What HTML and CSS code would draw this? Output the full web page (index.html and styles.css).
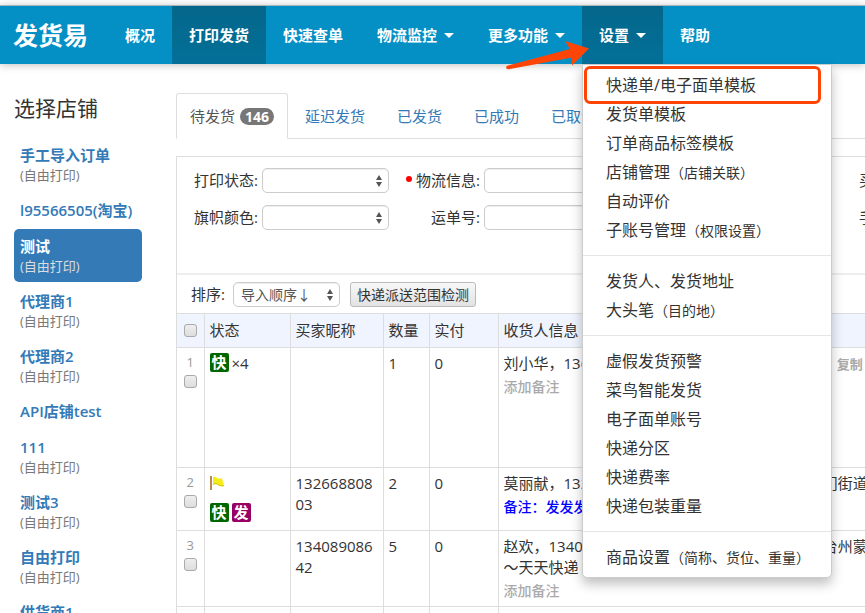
FILE: index.html
```
<!DOCTYPE html>
<html lang="zh-CN">
<head>
    <meta charset="UTF-8">
    <meta name="viewport" content="width=device-width, initial-scale=1.0">
    <title>发货易</title>
    <link rel="stylesheet" href="styles.css">
</head>
<body>
    <header class="navbar">
        <a class="brand" href="#">发货易</a>
        <ul class="nav">
            <li><a href="#">概况</a></li>
            <li class="active"><a href="#">打印发货</a></li>
            <li><a href="#">快速查单</a></li>
            <li><a href="#">物流监控<span class="caret"></span></a></li>
            <li><a href="#">更多功能<span class="caret"></span></a></li>
            <li class="active dropdown">
                <a href="#">设置<span class="caret"></span></a>
                <svg class="arrow" width="84" height="30" viewBox="0 0 84 30">
                    <path fill="#ff4505" d="M3 25.500L65 9L60 1L84 8.500L67 25.500L67 17.500L5 29Q1 30 1 27Q1 26 3 25.500Z"/>
                </svg>
                <ul class="menu">
                    <li class="marked"><a href="#">快递单/电子面单模板</a></li>
                    <li><a href="#">发货单模板</a></li>
                    <li><a href="#">订单商品标签模板</a></li>
                    <li><a href="#">店铺管理<small>（店铺关联）</small></a></li>
                    <li><a href="#">自动评价</a></li>
                    <li><a href="#">子账号管理<small>（权限设置）</small></a></li>
                    <li class="divider"></li>
                    <li><a href="#">发货人、发货地址</a></li>
                    <li><a href="#">大头笔<small>（目的地）</small></a></li>
                    <li class="divider"></li>
                    <li><a href="#">虚假发货预警</a></li>
                    <li><a href="#">菜鸟智能发货</a></li>
                    <li><a href="#">电子面单账号</a></li>
                    <li><a href="#">快递分区</a></li>
                    <li><a href="#">快递费率</a></li>
                    <li><a href="#">快递包装重量</a></li>
                    <li class="divider"></li>
                    <li><a href="#">商品设置<small>（简称、货位、重量）</small></a></li>
                </ul>
            </li>
            <li><a href="#">帮助</a></li>
        </ul>
    </header>

    <div class="page">
        <aside class="sidebar">
            <h2>选择店铺</h2>
            <ul class="shops">
                <li><a href="#">手工导入订单<small>(自由打印)</small></a></li>
                <li><a href="#">l95566505(淘宝)</a></li>
                <li class="active"><a href="#">测试<small>(自由打印)</small></a></li>
                <li><a href="#">代理商1<small>(自由打印)</small></a></li>
                <li><a href="#">代理商2<small>(自由打印)</small></a></li>
                <li><a href="#">API店铺test</a></li>
                <li><a href="#">111<small>(自由打印)</small></a></li>
                <li><a href="#">测试3<small>(自由打印)</small></a></li>
                <li><a href="#">自由打印<small>(自由打印)</small></a></li>
                <li><a href="#">供货商1<small>(自由打印)</small></a></li>
            </ul>
        </aside>

        <main class="main">
            <ul class="tabs">
                <li class="active"><a href="#">待发货<span class="badge">146</span></a></li>
                <li><a href="#">延迟发货</a></li>
                <li><a href="#">已发货</a></li>
                <li><a href="#">已成功</a></li>
                <li><a href="#">已取消</a></li>
            </ul>

            <div class="panel">
                <form class="filters">
                    <label for="printState">打印状态:</label>
                    <div class="select">
                        <select id="printState"><option></option></select>
                        <svg width="8" height="12" viewBox="0 0 8 12"><path d="M1 5L4 0L7 5ZM1 7L4 12L7 7Z"/></svg>
                    </div>
                    <label for="logistics"><i class="dot"></i>物流信息:</label>
                    <input type="text" id="logistics">
                    <label for="buyer">买家昵称:</label>

                    <label for="flagColor">旗帜颜色:</label>
                    <div class="select">
                        <select id="flagColor"><option></option></select>
                        <svg width="8" height="12" viewBox="0 0 8 12"><path d="M1 5L4 0L7 5ZM1 7L4 12L7 7Z"/></svg>
                    </div>
                    <label for="waybill">运单号:</label>
                    <input type="text" id="waybill">
                    <label for="phone">手机号码:</label>
                </form>

                <div class="toolbar">
                    <label for="sort">排序:</label>
                    <div class="select">
                        <select id="sort"><option>导入顺序↓</option></select>
                        <svg width="8" height="12" viewBox="0 0 8 12"><path d="M1 5L4 0L7 5ZM1 7L4 12L7 7Z"/></svg>
                    </div>
                    <button type="button" class="btn">快递派送范围检测</button>
                </div>

                <table class="orders">
                    <colgroup>
                        <col class="col-check">
                        <col class="col-state">
                        <col class="col-buyer">
                        <col class="col-count">
                        <col class="col-paid">
                        <col>
                    </colgroup>
                    <thead>
                        <tr>
                            <th class="check"><input type="checkbox" aria-label="全选"></th>
                            <th>状态</th>
                            <th>买家昵称</th>
                            <th>数量</th>
                            <th>实付</th>
                            <th>收货人信息</th>
                        </tr>
                    </thead>
                    <tbody>
                        <tr class="tall">
                            <td class="check">1<input type="checkbox" aria-label="订单1"></td>
                            <td><div class="tags"><span class="tag">快</span>×4</div></td>
                            <td></td>
                            <td>1</td>
                            <td>0</td>
                            <td>
                                刘小华，13600000000，浙江省杭州市西湖区文<button type="button" class="copy">复制</button>
                                <div class="remark">添加备注</div>
                            </td>
                        </tr>
                        <tr>
                            <td class="check">2<input type="checkbox" aria-label="订单2"></td>
                            <td>
                                <svg class="flag" width="15" height="15" viewBox="0 0 15 15">
                                    <path fill="#b98a50" d="M0 1H2V15H0Z"/>
                                    <path fill="#f4ec1c" d="M3 2Q5 1 7 3Q9 4 12 3L14 11Q11 12 8 10Q6 8 3 10Z"/>
                                    <path fill="#d9c800" d="M3 9Q6 7 8 9Q11 11 14 10V11Q11 12 8 10Q6 8 3 10Z"/>
                                </svg>
                                <div class="tags"><span class="tag">快</span><span class="tag purple">发</span></div>
                            </td>
                            <td>13266880803</td>
                            <td>2</td>
                            <td>0</td>
                            <td>
                                莫丽献，13266880803，广东省江门市蓬江区东门街道
                                <div class="remark note">备注：发发发</div>
                            </td>
                        </tr>
                        <tr class="last">
                            <td class="check">3<input type="checkbox" aria-label="订单3"></td>
                            <td></td>
                            <td>13408908642</td>
                            <td>5</td>
                            <td>0</td>
                            <td>
                                赵欢，13408908642，浙江省台州市椒江区海门台州蒙<br>～天天快递
                                <div class="remark">添加备注</div>
                            </td>
                        </tr>
                        <tr>
                            <td class="check"></td>
                            <td></td>
                            <td></td>
                            <td></td>
                            <td></td>
                            <td></td>
                        </tr>
                    </tbody>
                </table>
            </div>
        </main>
    </div>
</body>
</html>
```
FILE: styles.css
```
* {
    box-sizing: border-box;
}
html {
    overflow: hidden;
}
body {
    margin: 0;
    padding-top: 5px;
    background: #fff;
    color: #333;
    font-family: "Open Sans", "Noto Sans CJK SC", sans-serif;
    font-size: 15px;
    line-height: 21px;
}
ul {
    margin: 0;
    padding: 0;
    list-style: none;
}
a {
    color: #337ab7;
    text-decoration: none;
}
input, select, button {
    font-family: inherit;
    color: inherit;
}

/* top bar */
.navbar {
    position: relative;
    z-index: 10;
    display: flex;
    height: 59px;
    background: #048fc5;
    border-top: 1px solid #a9b6bc;
    box-shadow: 0 1px 8px rgba(0, 0, 0, 0.25);
}
.brand {
    width: 108px;
    padding-left: 13px;
    color: #fff;
    font-size: 25px;
    font-weight: bold;
    line-height: 58px;
}
.nav {
    display: flex;
}
.nav > li > a {
    display: flex;
    align-items: center;
    height: 58px;
    padding: 0 17px;
    color: #fff;
    font-weight: bold;
}
.nav > .active > a {
    background: linear-gradient(#04668a, #037099);
}
.caret {
    margin-left: 7px;
    border: 5px solid transparent;
    border-top-color: #fff;
    border-bottom: 0;
}
.dropdown {
    position: relative;
}
.menu {
    position: absolute;
    top: 58px;
    left: 0;
    width: 250px;
    padding: 6px 0 5px;
    background: #fff;
    border: 1px solid #ccc;
    border-radius: 0 0 5px 5px;
    box-shadow: 0 6px 12px rgba(0, 0, 0, 0.25);
}
.menu a {
    display: block;
    padding-left: 23px;
    color: #333;
    font-size: 16px;
    line-height: 29px;
}
.menu small {
    font-size: 14px;
}
.menu .divider {
    height: 1px;
    margin: 10px 0 11px;
    background: #e5e5e5;
}
.menu .marked {
    position: relative;
}
.marked::after {
    content: "";
    position: absolute;
    top: -5px;
    bottom: -4px;
    left: 1px;
    right: 10px;
    border: 3px solid #ff4505;
    border-radius: 6px;
    pointer-events: none;
}
.arrow {
    position: absolute;
    top: 34px;
    left: -77px;
    z-index: 1;
}

/* shop list */
.page {
    display: flex;
}
.sidebar {
    flex: 0 0 176px;
    padding: 29px 34px 0 14px;
}
.sidebar h2 {
    margin: 0 0 15px;
    font-size: 21px;
    font-weight: normal;
    line-height: 30px;
}
.shops li {
    margin-bottom: 2px;
}
.shops a {
    display: block;
    padding: 6px;
    border-radius: 5px;
    font-weight: 600;
    line-height: 22px;
}
.shops small {
    display: block;
    color: #777;
    font-size: 13px;
    font-weight: normal;
    line-height: 19px;
}
.shops .active a {
    background: #337ab7;
    color: #fff;
}
.shops .active small {
    color: #ddd;
}

/* orders */
.main {
    flex: 1 0 900px;
    padding-top: 29px;
}
.tabs {
    display: flex;
    border-bottom: 1px solid #ddd;
}
.tabs li {
    margin: 0 2px -1px 0;
}
.tabs a {
    display: flex;
    align-items: center;
    height: 46px;
    padding: 0 14px;
    border: 1px solid transparent;
    border-radius: 3px 3px 0 0;
}
.tabs .active a {
    padding: 0 13px;
    background: #fff;
    color: #555;
    border-color: #ddd;
    border-bottom-color: #fff;
}
.badge {
    margin-left: 5px;
    padding: 0 5px;
    border-radius: 9px;
    background: #777;
    color: #fff;
    font-size: 14px;
    font-weight: bold;
    line-height: 17px;
}
.panel {
    margin-top: 17px;
    border: 1px solid #ddd;
}
.filters {
    display: grid;
    grid-template-columns: 81px 127px 87px 348px auto;
    gap: 12px 4px;
    padding: 11px 0 43px;
    border-bottom: 2px solid #eee;
}
.filters label {
    text-align: right;
    line-height: 25px;
}
.filters label:nth-child(5n) {
    padding-left: 23px;
    text-align: left;
}
.dot {
    display: inline-block;
    width: 6px;
    height: 6px;
    margin-right: 4px;
    border-radius: 50%;
    background: #f00;
    vertical-align: 4px;
}
.select {
    position: relative;
}
.select svg {
    position: absolute;
    top: 7px;
    right: 6px;
    fill: #555;
    pointer-events: none;
}
.select select, .filters input {
    display: block;
    width: 100%;
    height: 25px;
    margin: 0;
    padding: 0 7px;
    background: #fff;
    border: 1px solid #ccc;
    border-radius: 5px;
    box-shadow: inset 0 1px 1px rgba(0, 0, 0, 0.07);
    color: #555;
    font-size: 14px;
    appearance: none;
}
.toolbar {
    display: flex;
    align-items: center;
    height: 38px;
    padding-left: 14px;
}
.toolbar .select {
    width: 107px;
    margin: 0 10px 0 8px;
}
.btn {
    height: 25px;
    padding: 0 6px;
    background: linear-gradient(#f8f8f8, #e2e2e2);
    border: 1px solid #bbb;
    border-radius: 3px;
    font-size: 14px;
    line-height: 21px;
}
.orders {
    width: 100%;
    table-layout: fixed;
    border-collapse: collapse;
}
.col-check {
    width: 27px;
}
.col-state {
    width: 86px;
}
.col-buyer {
    width: 93px;
}
.col-count {
    width: 46px;
}
.col-paid {
    width: 69px;
}
.orders th, .orders td {
    padding: 5px 5px 2px;
    border: 1px solid #ddd;
    border-width: 1px 0 0 1px;
    text-align: left;
    vertical-align: top;
    font-weight: normal;
    overflow-wrap: anywhere;
}
.orders th {
    height: 34px;
    padding: 0 5px;
    background: #eff4fe;
    vertical-align: middle;
}
.orders th:first-child, .orders td:first-child {
    border-left: 0;
}
.orders td {
    height: 63px;
}
.orders .tall td {
    height: 120px;
}
.orders .last td {
    height: 76px;
}
.orders .check {
    padding: 4px 0 0;
    color: #999;
    font-size: 13px;
    text-align: center;
}
.orders th.check {
    padding: 0;
}
.check input {
    display: block;
    width: 13px;
    height: 13px;
    margin: 2px auto 0;
    background: linear-gradient(#eee, #ddd);
    border: 1px solid #aaa;
    border-radius: 3px;
    appearance: none;
}
th.check input {
    margin-top: 0;
}
.tags {
    display: flex;
    gap: 3px;
}
.tag {
    width: 19px;
    height: 19px;
    border-radius: 2px;
    background: #060;
    color: #fff;
    font-weight: bold;
    line-height: 19px;
    text-align: center;
}
.purple {
    background: #906;
}
.flag {
    display: block;
    margin: 2px 0 13px;
}
.copy {
    margin-left: 14px;
    padding: 0;
    background: none;
    border: 0;
    color: #aaa;
    font-size: 13px;
    font-weight: bold;
}
.remark {
    color: #aaa;
    font-size: 14px;
    font-weight: 500;
    line-height: 26px;
}
.note {
    color: #00f;
}
```
